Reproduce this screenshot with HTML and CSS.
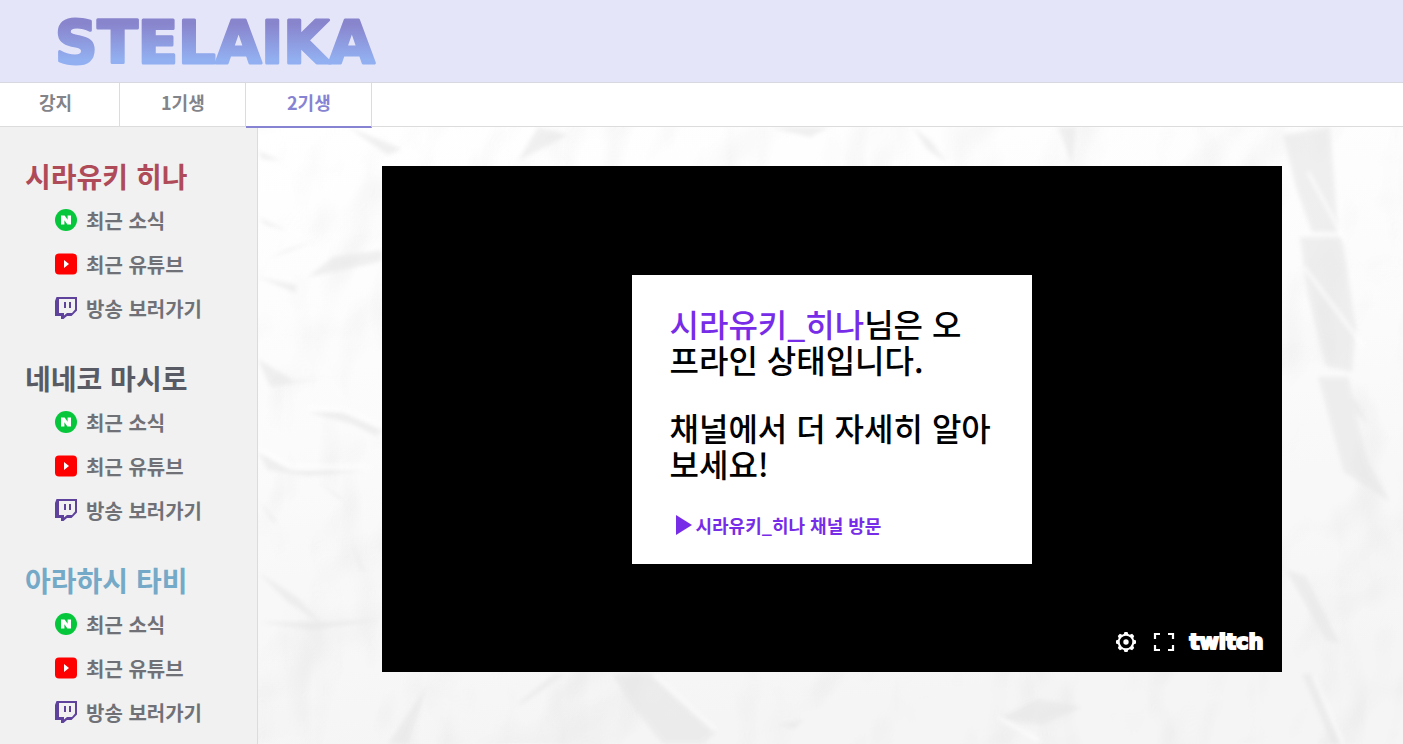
FILE: index.html
```html
<!DOCTYPE html>
<html lang="ko">
<head>
<meta charset="utf-8">
<meta name="viewport" content="width=device-width, initial-scale=1">
<title>STELAIKA</title>
<link rel="stylesheet" href="styles.css">
</head>
<body>
<svg class="defs" aria-hidden="true">
  <symbol id="naver" viewBox="0 0 22 22"><circle cx="11" cy="11" r="11" fill="#06c73c"/><path d="M6 6.500h3.600l3 4.300V6.500H16v9h-3.600l-3-4.300v4.300H6z" fill="#fff"/></symbol>
  <symbol id="youtube" viewBox="0 0 22 22"><rect y="0.500" width="22" height="21" rx="4" fill="#f00"/><path d="M9 7v8l5-4z" fill="#fff"/></symbol>
  <symbol id="twitch" viewBox="0 0 22 22"><path d="M1.500 0H22v13.500L16.500 19H12l-3.500 3H6v-3H0V4z" fill="#5f429c"/><path d="M4 2h16v10.500L17 16h-5l-3 2.500V16H4z" fill="#f1f1f1"/><path d="M9 5h2v6H9zM14 5h2v6h-2z" fill="#5f429c"/></symbol>
</svg>
<header class="header">
  <a class="brand" href="#" aria-label="STELAIKA">
    <svg class="logo" width="340" height="78" viewBox="0 0 340 78">
      <defs><linearGradient id="logo-fill" gradientUnits="userSpaceOnUse" x1="0" y1="15" x2="0" y2="63"><stop offset="0.150" stop-color="#8985cd"/><stop offset="0.900" stop-color="#92b0f1"/></linearGradient></defs>
      <text class="logo-text" x="1" y="61">STELAIKA</text>
    </svg>
  </a>
</header>
<nav class="tabs">
  <a class="tab tab-first" href="#">강지</a>
  <a class="tab" href="#">1기생</a>
  <a class="tab tab-active" href="#" aria-current="page">2기생</a>
</nav>
<div class="layout">
  <aside class="sidebar">
    <section class="member">
      <h2 class="name name-hina">시라유키 히나</h2>
      <ul class="links">
        <li><a class="link" href="#"><svg class="icon"><use href="#naver"/></svg>최근 소식</a></li>
        <li><a class="link" href="#"><svg class="icon"><use href="#youtube"/></svg>최근 유튜브</a></li>
        <li><a class="link" href="#"><svg class="icon"><use href="#twitch"/></svg>방송 보러가기</a></li>
      </ul>
    </section>
    <section class="member">
      <h2 class="name name-mashiro">네네코 마시로</h2>
      <ul class="links">
        <li><a class="link" href="#"><svg class="icon"><use href="#naver"/></svg>최근 소식</a></li>
        <li><a class="link" href="#"><svg class="icon"><use href="#youtube"/></svg>최근 유튜브</a></li>
        <li><a class="link" href="#"><svg class="icon"><use href="#twitch"/></svg>방송 보러가기</a></li>
      </ul>
    </section>
    <section class="member">
      <h2 class="name name-tabi">아라하시 타비</h2>
      <ul class="links">
        <li><a class="link" href="#"><svg class="icon"><use href="#naver"/></svg>최근 소식</a></li>
        <li><a class="link" href="#"><svg class="icon"><use href="#youtube"/></svg>최근 유튜브</a></li>
        <li><a class="link" href="#"><svg class="icon"><use href="#twitch"/></svg>방송 보러가기</a></li>
      </ul>
    </section>
  </aside>
  <main class="stage">
    <svg class="paper" aria-hidden="true" viewBox="0 0 1145 617" preserveAspectRatio="xMidYMid slice">
      <defs>
        <filter id="crumple" x="0" y="0" width="100%" height="100%" color-interpolation-filters="sRGB">
          <feTurbulence type="fractalNoise" baseFrequency="0.009 0.007" numOctaves="3" seed="8"/>
          <feDiffuseLighting surfaceScale="16" diffuseConstant="1.100" lighting-color="#fff"><feDistantLight azimuth="215" elevation="64"/></feDiffuseLighting>
        </filter>
        <filter id="soft"><feGaussianBlur stdDeviation="2"/></filter>
        <linearGradient id="shade" x1="0" y1="0" x2="0.200" y2="1"><stop offset="0" stop-color="#fff"/><stop offset="0.500" stop-color="#fbfbfb"/><stop offset="1" stop-color="#f4f4f4"/></linearGradient>
      </defs>
      <rect width="1145" height="617" fill="url(#shade)"/>
      <rect width="1145" height="617" filter="url(#crumple)" opacity="0.120"/>
      <g filter="url(#soft)" fill="#e6e6e6" opacity="0.600">
        <path d="M50 150 75 130 124 123 124 134 90 142zM10 132 58 114 30 122zM0 90l30 14-22-6zM0 24l24 10-20-2zM0 150l38 8 0 8zM0 232l36 22 26-2-50 8zM50 285l34 0 40 18-6 6-24-12zM0 325l32 18 78 0-60 6-40-6zM60 354l28 20-10-4zM0 372l20 24-6-2zM94 415l14 32-6-6zM0 445l40 26 24 26-34-22zM0 495l60 0 64-2-70 10z"/>
        <path d="M354 547 395 547 458 605 445 617 405 617 375 580zM258 578l38-31 12 0-44 30zM130 617l40-60-20 60zM740 592l40-20 44 8-40 18zM1044 547l12 0 28 70-10 0zM520 598l26-6-10 10z"/>
        <path d="M1025 8l47-8 4 50 4 55-26 0-16-45zM1042 110l42 0 14 90-4 45-26-6-18-70zM1060 250l30 0 18 80 24 45-46-30zM1082 254l18 22 10 22-22-24zM1028 443l20 6 34 68-14-4z"/>
        <path d="M512 0h60l-20 10zM655 0l18 14 16 22-20-14zM800 0l14 36 4-36zM90 0l40 28 14-6zM280 0l-20 34 50-26z"/>
      </g>
      <g filter="url(#soft)" fill="none" stroke="#fff" stroke-width="3" opacity="0.800">
        <path d="M0 321 34 340 112 340M48 281l40 2 36 16M395 547l62 56M1050 45l38 70M1046 140l60 80M740 590l42 24M1055 547l30 70"/>
      </g>
    </svg>
    <div class="player">
      <div class="offline">
        <p class="message"><span class="channel">시라유키_히나</span>님은 오<br>프라인 상태입니다.</p>
        <p class="message">채널에서 더 자세히 알아<br>보세요!</p>
        <a class="visit" href="#"><svg class="play" viewBox="0 0 16 20"><path d="M0 0v20l16-10z" fill="#772ce8"/></svg>시라유키_히나 채널 방문</a>
      </div>
      <div class="controls">
        <button class="control" type="button" aria-label="설정"><svg width="22" height="22" viewBox="0 0 22 22"><path fill="#fff" fill-rule="evenodd" d="M9.500 1h3l.7 2 1.700.7 2.200-.9 2.100 2.100-.9 2.200.7 1.700 2 .7v3l-2 .7-.7 1.700.9 2.200-2.100 2.100-2.200-.9-1.700.7-.7 2h-3l-.7-2-1.700-.7-2.200.9-2.100-2.100.9-2.200-.7-1.700-2-.7v-3l2-.7.7-1.700-.9-2.200 2.100-2.100 2.200.9 1.700-.7zM11 4.700a6.300 6.300 0 1 0 0 12.600 6.300 6.300 0 0 0 0-12.600z"/><circle cx="11" cy="11" r="2.700" fill="#fff"/></svg></button>
        <button class="control" type="button" aria-label="전체 화면"><svg width="22" height="22" viewBox="0 0 22 22"><path d="M2 8V3h5M15 3h5v5M20 14v5h-5M7 19H2v-5" fill="none" stroke="#fff" stroke-width="2.200"/></svg></button>
        <a class="wordmark" href="#">twitch</a>
      </div>
    </div>
  </main>
</div>
</body>
</html>
```
FILE: styles.css
```css
* { box-sizing: border-box; }
body {
  margin: 0;
  min-height: 100vh;
  display: flex;
  flex-direction: column;
  font-family: "Noto Sans CJK KR", sans-serif;
  background: #fff;
}
a { color: inherit; text-decoration: none; }
.defs { position: absolute; width: 0; height: 0; }
.header {
  display: flex;
  align-items: center;
  height: 83px;
  padding-left: 54px;
  background: #e5e5fa;
  border-bottom: 1px solid #d8d8df;
}
.brand, .logo { display: block; }
.logo-text {
  font: bold 59px "DejaVu Sans", sans-serif;
  fill: url(#logo-fill);
  stroke: url(#logo-fill);
  stroke-width: 3px;
  stroke-linejoin: round;
}
.tabs {
  position: relative;
  z-index: 1;
  display: flex;
  height: 44px;
  border-bottom: 1px solid #dcdcdc;
}
.tab {
  width: 126px;
  height: 43px;
  padding-left: 41px;
  border-right: 1px solid #dcdcdc;
  font-size: 18px;
  font-weight: bold;
  line-height: 39px;
  color: #83848a;
}
.tab-first { width: 120px; padding-left: 39px; }
.tab-active { height: 45px; color: #8783d3; border-bottom: 2px solid #8783d3; }
.layout { flex: 1; display: flex; }
.sidebar {
  flex: none;
  width: 258px;
  padding: 31px 0 0 25px;
  display: flex;
  flex-direction: column;
  gap: 30px;
  background: #f1f1f1;
  border-right: 1px solid #dcdcdc;
}
.name { margin: 0; font-size: 28px; line-height: 36px; padding-bottom: 4px; }
.name-hina { color: #af4b59; }
.name-mashiro { color: #585b64; }
.name-tabi { color: #74a9c7; }
.links { margin: 0; padding: 0 0 0 30px; list-style: none; }
.link {
  display: flex;
  align-items: center;
  gap: 9px;
  height: 44px;
  font-size: 20px;
  font-weight: bold;
  color: #707177;
}
.icon { width: 22px; height: 22px; }
.stage {
  position: relative;
  flex: 1;
  min-width: 0;
  padding: 39px 20px 39px 22px;
  overflow: hidden;
}
.paper { position: absolute; inset: 0; width: 100%; height: 100%; }
.player {
  position: relative;
  display: flex;
  align-items: center;
  justify-content: center;
  width: 100%;
  max-width: 900px;
  aspect-ratio: 900 / 506;
  margin: 0 auto;
  background: #000;
}
.offline {
  width: 400px;
  padding: 30px 38px 29px;
  background: #fff;
}
.message {
  margin: 0 0 32px;
  font-size: 32px;
  font-weight: 500;
  line-height: 36px;
  white-space: nowrap;
}
.channel { color: #772ce8; }
.visit {
  display: flex;
  align-items: center;
  gap: 4px;
  padding: 2px 0 0 6px;
  font-size: 18px;
  font-weight: bold;
  line-height: 20px;
  color: #772ce8;
}
.play { width: 16px; height: 20px; }
.controls {
  position: absolute;
  right: 18px;
  bottom: 19px;
  display: flex;
  align-items: center;
  gap: 16px;
}
.control { display: block; padding: 0; border: 0; background: none; height: 22px; }
.wordmark {
  margin-left: -2px;
  font: bold 21px/22px "DejaVu Sans", sans-serif;
  color: #fff;
  -webkit-text-stroke: 2px #fff;
}
```
